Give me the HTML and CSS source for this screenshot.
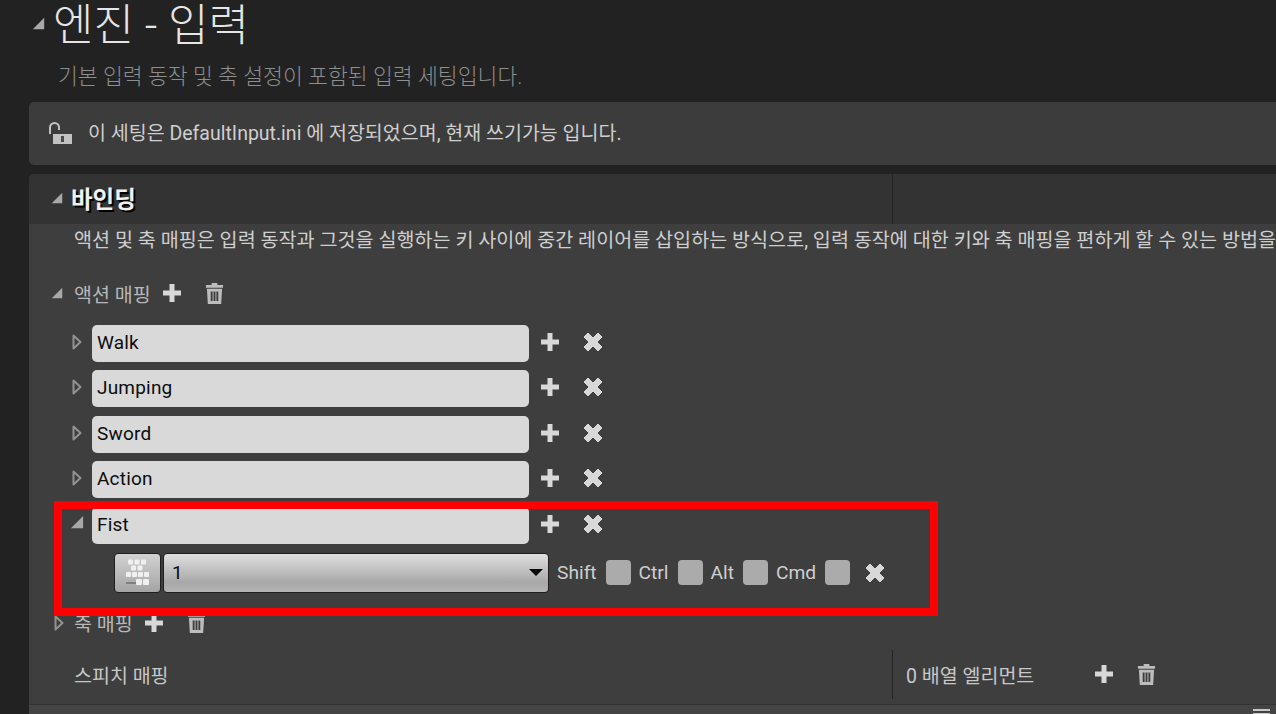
FILE: index.html
```html
<!DOCTYPE html>
<html lang="ko">
<head>
  <meta charset="UTF-8">
  <title>엔진 - 입력</title>
  <link rel="stylesheet" href="styles.css">
</head>
<body>
  <svg class="defs" width="0" height="0">
    <symbol id="plus" viewBox="0 0 20 20"><path d="M7.500 1h5v6.500H19v5h-6.500V19h-5v-6.500H1v-5h6.500z" fill="#d8d8d8"/></symbol>
    <symbol id="cross" viewBox="0 0 20 20"><path d="M5 1 10 6 15 1 19 5 14 10 19 15 15 19 10 14 5 19 1 15 6 10 1 5z" fill="#d8d8d8" stroke="#d8d8d8" stroke-linejoin="round"/></symbol>
    <symbol id="trash" viewBox="0 0 20 22"><path d="M7 0h6v2h6v3H1V2h6zM2 6h16l-1 16H3zM6 9v10h2V9zm3 0v10h2V9zm3 0v10h2V9z" fill="#bdbdbd" fill-rule="evenodd"/></symbol>
    <symbol id="open" viewBox="0 0 10 16"><path d="M1.500 1.500 8.500 8 1.500 14.500z" fill="none" stroke="#929292" stroke-width="2" stroke-linejoin="round"/></symbol>
    <symbol id="down" viewBox="0 0 16 16"><path d="M15 1v14H1z" fill="#a8a8a8"/></symbol>
  </svg>

  <main class="page">
    <header class="title-block">
      <h1 class="title"><svg class="title-arrow"><use href="#down"/></svg>엔진 - 입력</h1>
      <p class="subtitle">기본 입력 동작 및 축 설정이 포함된 입력 세팅입니다.</p>
    </header>

    <div class="notice">
      <svg class="lock" viewBox="0 0 25 23" width="25" height="23">
        <path d="M2 12V5.500a4.500 4.500 0 0 1 9 0V8" fill="none" stroke="#c2c2c2" stroke-width="2"/>
        <path d="M5 12h19v10H5z" fill="#c2c2c2"/>
        <path d="M13 14h3v6h-3z" fill="#4a4a4a"/>
      </svg>
      <span class="notice-text">이 세팅은 DefaultInput.ini 에 저장되었으며, 현재 쓰기가능 입니다.</span>
    </div>

    <section class="panel">
      <div class="panel-head">
        <h2 class="panel-title"><svg class="head-arrow"><use href="#down"/></svg>바인딩</h2>
      </div>
      <div class="panel-body">
        <p class="desc">액션 및 축 매핑은 입력 동작과 그것을 실행하는 키 사이에 중간 레이어를 삽입하는 방식으로, 입력 동작에 대한 키와 축 매핑을 편하게 할 수 있는 방법을</p>

        <div class="group-row">
          <svg class="head-arrow small"><use href="#down"/></svg>
          <span class="group-label">액션 매핑</span>
          <svg class="ico plus"><use href="#plus"/></svg>
          <svg class="ico trash"><use href="#trash"/></svg>
        </div>

        <div class="maps">
          <div class="map-row">
            <svg class="row-arrow"><use href="#open"/></svg>
            <div class="name-box">Walk</div>
            <svg class="ico plus"><use href="#plus"/></svg>
            <svg class="ico cross"><use href="#cross"/></svg>
          </div>
          <div class="map-row">
            <svg class="row-arrow"><use href="#open"/></svg>
            <div class="name-box">Jumping</div>
            <svg class="ico plus"><use href="#plus"/></svg>
            <svg class="ico cross"><use href="#cross"/></svg>
          </div>
          <div class="map-row">
            <svg class="row-arrow"><use href="#open"/></svg>
            <div class="name-box">Sword</div>
            <svg class="ico plus"><use href="#plus"/></svg>
            <svg class="ico cross"><use href="#cross"/></svg>
          </div>
          <div class="map-row">
            <svg class="row-arrow"><use href="#open"/></svg>
            <div class="name-box">Action</div>
            <svg class="ico plus"><use href="#plus"/></svg>
            <svg class="ico cross"><use href="#cross"/></svg>
          </div>
          <div class="map-row">
            <svg class="row-arrow expanded"><use href="#down"/></svg>
            <div class="name-box">Fist</div>
            <svg class="ico plus"><use href="#plus"/></svg>
            <svg class="ico cross"><use href="#cross"/></svg>
          </div>
          <div class="key-row">
            <div class="key-btn">
              <svg viewBox="0 0 28 28" width="28" height="28">
                <g fill="#f0f0f0">
                  <rect x="4" y="0.500" width="5" height="5" rx="1"/><rect x="10.500" y="0.500" width="5" height="5" rx="1"/><rect x="17" y="0.500" width="5" height="5" rx="1"/>
                  <rect x="7" y="6.500" width="5" height="5" rx="1"/><rect x="13.500" y="6.500" width="5" height="5" rx="1"/>
                  <rect x="2" y="13" width="5" height="5" rx="1"/><rect x="8" y="13" width="5" height="5" rx="1"/><rect x="14" y="13" width="5" height="5" rx="1"/><rect x="20" y="13" width="5" height="5" rx="1"/>
                  <rect x="12" y="20" width="6" height="6" rx="1"/><rect x="19" y="20" width="6" height="6" rx="1"/>
                </g>
                <path d="M2 24h10" stroke="#808080" stroke-width="2"/>
              </svg>
            </div>
            <div class="key-select"><span>1</span><i class="caret"></i></div>
            <label class="mod">Shift<i class="check"></i></label>
            <label class="mod">Ctrl<i class="check"></i></label>
            <label class="mod">Alt<i class="check"></i></label>
            <label class="mod">Cmd<i class="check"></i></label>
            <svg class="ico cross key-cross"><use href="#cross"/></svg>
          </div>
        </div>

        <div class="group-row axis">
          <svg class="group-open"><use href="#open"/></svg>
          <span class="group-label">축 매핑</span>
          <svg class="ico plus"><use href="#plus"/></svg>
          <svg class="ico trash"><use href="#trash"/></svg>
        </div>

        <div class="speech-row">
          <span class="speech-label">스피치 매핑</span>
          <div class="speech-value">
            <span class="count">0 배열 엘리먼트</span>
            <svg class="ico plus"><use href="#plus"/></svg>
            <svg class="ico trash"><use href="#trash"/></svg>
          </div>
        </div>

        <div class="highlight"></div>
      </div>
    </section>

    <div class="bottom-row"><i class="grip"></i></div>
  </main>
</body>
</html>
```

FILE: styles.css
```css
* {
  box-sizing: border-box;
}

html, body {
  height: 714px;
  overflow: hidden;
}

body {
  margin: 0;
  background: #222222;
  font-family: Roboto, "Noto Sans CJK KR", sans-serif;
  color: #cfcfcf;
}

.defs {
  position: absolute;
}

.page {
  width: 1276px;
  padding-left: 29px;
}

/* title */
.title-block {
  height: 102px;
}

.title {
  margin: 0;
  height: 52px;
  display: flex;
  align-items: center;
  font-size: 44px;
  font-weight: 300;
  line-height: 50px;
  color: #e6e6e6;
}

.title-arrow {
  width: 13px;
  height: 13px;
  margin: 0 8px 6px 3px;
}

.subtitle {
  margin: 10px 0 0;
  padding-left: 29px;
  font-size: 21.600px;
  line-height: 30px;
  font-weight: 300;
  color: #8e8e8e;
}

/* notice */
.notice {
  height: 63px;
  display: flex;
  align-items: center;
  gap: 15px;
  padding-left: 19px;
  background: #3c3c3c;
  border-radius: 5px 0 0 5px;
  font-size: 19.500px;
  color: #cfcfcf;
}

.notice-text {
  margin-bottom: 4px;
}

/* panel */
.panel {
  position: relative;
  margin-top: 9px;
  background: #3e3e3e;
  border-radius: 5px 0 0 0;
}

.panel-head {
  height: 50px;
  display: flex;
  align-items: center;
  padding-left: 22px;
  background: #333333;
  border-radius: 5px 0 0 0;
  position: relative;
}

.panel-head::after {
  content: "";
  position: absolute;
  left: 863px;
  top: 0;
  bottom: 0;
  width: 1px;
  background: #232323;
}

.panel-title {
  margin: 0 0 3px;
  display: flex;
  align-items: center;
  font-size: 23.500px;
  font-weight: 700;
  color: #f0f0f0;
  text-shadow: 2px 2px 0 #000;
}

.head-arrow {
  width: 12px;
  height: 12px;
  margin-right: 8px;
}

.panel-body {
  position: relative;
  height: 480px;
}

.desc {
  margin: 0;
  padding: 3px 0 0 45px;
  font-size: 19.600px;
  line-height: 27px;
  white-space: nowrap;
  color: #cfcfcf;
}

.group-row {
  display: flex;
  align-items: center;
  height: 30px;
  margin-top: 24px;
  padding-left: 22px;
}

.group-row .small {
  margin-right: 11px;
}

.group-label {
  font-size: 19.500px;
  color: #b8b8b8;
}

.ico {
  display: block;
  flex: none;
}

.plus {
  width: 20px;
  height: 20px;
}

.cross {
  width: 20px;
  height: 20px;
}

.trash {
  width: 19px;
  height: 21px;
}

.group-row .plus {
  margin-left: 11px;
}

.group-row .trash {
  margin-left: 23px;
}

/* mapping rows */
.maps {
  margin-top: 17px;
  display: flex;
  flex-direction: column;
  gap: 8.400px;
}

.map-row {
  height: 37px;
  display: flex;
  align-items: center;
}

.row-arrow {
  width: 10px;
  height: 16px;
  margin: 0 10px 3px 43px;
}

.row-arrow.expanded {
  width: 14px;
  height: 14px;
  margin: 0 8px 7px 41px;
}

.name-box {
  width: 437px;
  height: 37px;
  padding-left: 5px;
  background: #d9d9d9;
  border-radius: 5px;
  color: #0c0c0c;
  font-size: 19px;
  letter-spacing: 0.200px;
  line-height: 35px;
}

.map-row .plus {
  margin: 0 0 3px 11px;
}

.map-row .cross {
  margin: 0 0 3px 23px;
}

.key-row {
  height: 40px;
  margin-top: 1px;
  display: flex;
  align-items: center;
  padding-left: 85px;
}

.key-btn {
  width: 47px;
  height: 40px;
  display: flex;
  align-items: center;
  justify-content: center;
  border: 1px solid #1e1e1e;
  border-radius: 4px;
  background: linear-gradient(#d2d2d2, #a4a4a4);
}

.key-select {
  width: 386px;
  height: 40px;
  margin-left: 2px;
  display: flex;
  align-items: center;
  justify-content: space-between;
  padding: 0 5px 0 8px;
  border: 1px solid #1e1e1e;
  border-radius: 4px;
  background: linear-gradient(#e0e0e0, #a8a8a8 75%, #b4b4b4);
  color: #0c0c0c;
  font-size: 19px;
}

.caret {
  width: 0;
  height: 0;
  border-left: 7px solid transparent;
  border-right: 7px solid transparent;
  border-top: 7px solid #000;
}

.mod {
  display: flex;
  align-items: center;
  gap: 9px;
  margin-left: 8px;
  font-size: 19.200px;
  color: #cfcfcf;
}

.check {
  width: 25px;
  height: 25px;
  background: #ababab;
  border-radius: 4px;
}

.key-cross {
  margin-left: 15px;
}

.axis {
  margin-top: 15px;
}

.group-open {
  width: 10px;
  height: 16px;
  margin: 0 10px 0 3px;
}

.axis .trash {
  margin-left: 23px;
}

.speech-row {
  height: 49px;
  margin-top: 12px;
  display: flex;
  align-items: center;
  padding-left: 45px;
}

.speech-label {
  width: 818px;
  font-size: 19.500px;
  color: #c8c8c8;
}

.speech-value {
  height: 49px;
  flex: 1;
  display: flex;
  align-items: center;
  padding-left: 13px;
  border-left: 1px solid #232323;
}

.count {
  width: 188px;
  font-size: 19.500px;
  color: #c8c8c8;
}

.speech-value .trash {
  margin-left: 23px;
}

/* red annotation */
.highlight {
  position: absolute;
  left: 25px;
  top: 277px;
  width: 884px;
  height: 115px;
  border: 8px solid #ff0000;
}

.bottom-row {
  height: 10px;
  background: #444444;
  border-top: 1px solid #333333;
  position: relative;
}

.grip {
  position: absolute;
  right: 6px;
  top: 4px;
  width: 17px;
  height: 6px;
  border-top: 2px solid #c8c8c8;
  border-bottom: 2px solid #c8c8c8;
}
```
